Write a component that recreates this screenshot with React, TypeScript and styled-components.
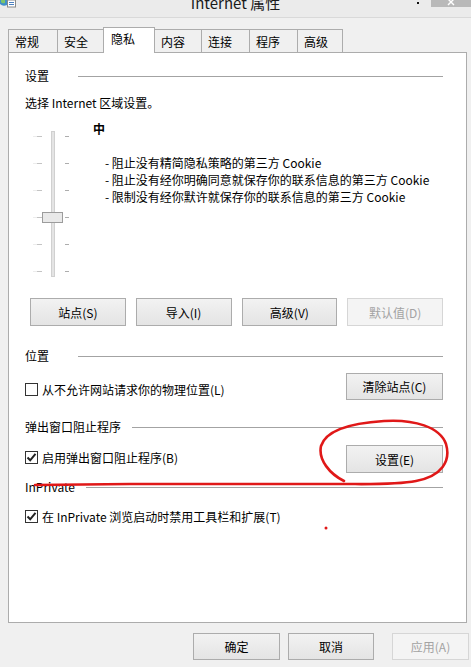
import React from "react";
import styled, { createGlobalStyle } from "styled-components";

const Global = createGlobalStyle`
  html, body { margin: 0; padding: 0; background: #f0f0f0; }
  body {
    font-family: "Noto Sans CJK SC", "Noto Sans", sans-serif;
    font-size: 12px;
    color: #000;
  }
  * { box-sizing: border-box; }
`;

const Window = styled.div`
  position: relative;
  width: 471px;
  height: 667px;
  overflow: hidden;
  background: #f0f0f0;
  display: flex;
  flex-direction: column;
`;

const TitleBar = styled.div`
  height: 18px;
  border-bottom: 1px solid #d9d9d9;
  background: #ebebeb;
  display: grid;
  grid-template-columns: 1fr auto 1fr;
  overflow: hidden;
`;

const TitleIcon = styled.div`
  display: flex;
  align-items: flex-start;
`;

const TitleText = styled.div`
  font-size: 15px;
  line-height: 15px;
  margin-top: -5px;
  color: #1a1a1a;
  white-space: nowrap;
`;

const TitleControls = styled.div`
  display: flex;
  justify-content: flex-end;
  align-items: flex-start;
`;

const Dot = styled.div`
  width: 2px;
  height: 2px;
  margin-top: 2px;
  margin-right: 12px;
  background: #111;
`;

const CloseBtn = styled.div`
  width: 40px;
  height: 7px;
  background: #b9b9b9;
  display: flex;
  justify-content: center;
`;

const Body = styled.div`
  padding: 9px 0 0 8px;
  display: flex;
  flex-direction: column;
`;

const TabStrip = styled.div`
  display: flex;
  align-items: flex-end;
  height: 25px;
`;

const Tab = styled.div<{ $w: number; $active?: boolean; $first?: boolean }>`
  position: relative;
  z-index: ${(p) => (p.$active ? 2 : 1)};
  width: ${(p) => p.$w}px;
  height: ${(p) => (p.$active ? 26 : 23)}px;
  margin-bottom: ${(p) => (p.$active ? -1 : 0)}px;
  margin-left: ${(p) => (p.$first ? 0 : -1)}px;
  border: 1px solid #acacac;
  border-bottom: none;
  background: ${(p) => (p.$active ? "#ffffff" : "#f0f0f0")};
  padding: ${(p) => (p.$active ? "3px 0 0 7px" : "4px 0 0 6px")};
  line-height: 16px;
  white-space: nowrap;
`;

const Panel = styled.div`
  width: 459px;
  height: 571px;
  border: 1px solid #acacac;
  background: #fff;
  padding: 15px 23px 0 16px;
  display: flex;
  flex-direction: column;
`;

const GroupHeader = styled.div<{ $mt: number }>`
  display: flex;
  align-items: center;
  height: 16px;
  margin-top: ${(p) => p.$mt}px;
`;

const GroupTitle = styled.span`
  min-width: 53px;
  padding-right: 11px;
  line-height: 16px;
  white-space: nowrap;
`;

const GroupLine = styled.div`
  flex: 1;
  height: 1px;
  background: #a3a3a3;
`;

const TextLine = styled.div<{ $mt?: number }>`
  line-height: 16px;
  margin-top: ${(p) => p.$mt ?? 0}px;
  white-space: nowrap;
`;

const PrivacyBlock = styled.div`
  display: flex;
  margin-top: 10px;
  height: 156px;
`;

const SliderBox = styled.div`
  margin: 10px 0 0 8px;
  width: 37px;
  height: 146px;
`;

const LevelInfo = styled.div`
  margin-left: 23px;
  display: flex;
  flex-direction: column;
`;

const LevelName = styled.div`
  font-weight: bold;
  line-height: 16px;
`;

const LevelList = styled.div`
  margin: 17px 0 0 12px;
  display: flex;
  flex-direction: column;
`;

const LevelItem = styled.div`
  line-height: 17px;
  white-space: nowrap;
`;

const ButtonRow = styled.div`
  margin-top: 21px;
  padding-left: 5px;
  display: grid;
  grid-template-columns: repeat(4, 1fr);
  column-gap: 10px;
`;

const Button = styled.div<{ $disabled?: boolean; $w?: number; $h?: number; $ml?: number }>`
  width: ${(p) => (p.$w ? `${p.$w}px` : "auto")};
  height: ${(p) => p.$h ?? 28}px;
  margin-left: ${(p) => p.$ml ?? 0}px;
  border: 1px solid ${(p) => (p.$disabled ? "#d6d6d6" : "#acacac")};
  background: ${(p) =>
    p.$disabled ? "#f4f4f4" : "linear-gradient(#f2f2f2, #e4e4e4)"};
  color: ${(p) => (p.$disabled ? "#a3a3a3" : "#000")};
  display: flex;
  align-items: center;
  justify-content: center;
  white-space: nowrap;
  flex-shrink: 0;
`;

const OptionRow = styled.div<{ $mt: number }>`
  margin-top: ${(p) => p.$mt}px;
  display: flex;
  justify-content: space-between;
  align-items: flex-start;
`;

const CheckItem = styled.div<{ $top?: number }>`
  margin-top: ${(p) => p.$top ?? 0}px;
  display: flex;
  align-items: center;
  height: 16px;
  white-space: nowrap;
`;

const Box = styled.div`
  width: 13px;
  height: 13px;
  border: 1px solid #333;
  background: #fff;
  margin-right: 4px;
  display: flex;
  align-items: center;
  justify-content: center;
`;

const Footer = styled.div`
  display: flex;
  margin-top: 10px;
  padding-left: 185px;
`;

const Overlay = styled.svg`
  position: absolute;
  left: 0;
  top: 0;
  pointer-events: none;
`;

const Check = ({ checked }: { checked?: boolean }) => (
  <Box>
    {checked && (
      <svg width="11" height="11" viewBox="0 0 11 11">
        <path d="M1.5 5.5 L4.2 8.3 L9.5 1.8" fill="none" stroke="#222" strokeWidth="2" />
      </svg>
    )}
  </Box>
);

const Slider = () => {
  const ticks = [5, 32, 59, 86, 113, 140];
  return (
    <SliderBox>
      <svg width="37" height="146" viewBox="0 0 37 146">
        {ticks.map((y) => (
          <g key={y}>
            <line x1="0" y1={y + 0.5} x2="4" y2={y + 0.5} stroke="#ececec" />
            <line x1="4" y1={y + 0.5} x2="9" y2={y + 0.5} stroke="#c4c4c4" />
            <line x1="32" y1={y + 0.5} x2="36" y2={y + 0.5} stroke="#adadad" />
          </g>
        ))}
        <rect x="18.5" y="0.5" width="3" height="145" fill="#e4e4e4" stroke="#d0d0d0" />
        <rect x="9.5" y="81.5" width="20" height="10" fill="#e9e9e9" stroke="#9c9c9c" />
      </svg>
    </SliderBox>
  );
};

const tabs = [
  { label: "常规", w: 50 },
  { label: "安全", w: 47 },
  { label: "隐私", w: 52, active: true },
  { label: "内容", w: 48 },
  { label: "连接", w: 49 },
  { label: "程序", w: 49 },
  { label: "高级", w: 46 },
];

export default function App() {
  return (
    <>
      <Global />
      <Window>
        <TitleBar>
          <TitleIcon>
            <svg width="16" height="8" viewBox="0 0 16 8">
              <path d="M0 0 H7 V5 Q3 7 0 4 Z" fill="#3f8fc9" />
              <path d="M1 0 H5 V3 Q2 4 1 2 Z" fill="#7cc46a" />
              <rect x="7.5" y="0" width="8" height="7" fill="#fff" stroke="#8a8a8a" />
              <line x1="9" y1="2.5" x2="14" y2="2.5" stroke="#4a7fbf" />
              <line x1="9" y1="4.5" x2="14" y2="4.5" stroke="#4a7fbf" />
            </svg>
          </TitleIcon>
          <TitleText>Internet 属性</TitleText>
          <TitleControls>
            <Dot />
            <CloseBtn>
              <svg width="14" height="7" viewBox="0 0 14 7">
                <path d="M2 -3 L10 5 M12 -3 L4 5" stroke="#fff" strokeWidth="1.4" />
              </svg>
            </CloseBtn>
          </TitleControls>
        </TitleBar>
        <Body>
          <TabStrip>
            {tabs.map((t, i) => (
              <Tab key={t.label} $w={t.w} $active={t.active} $first={i === 0}>
                {t.label}
              </Tab>
            ))}
          </TabStrip>
          <Panel>
            <GroupHeader $mt={0}>
              <GroupTitle>设置</GroupTitle>
              <GroupLine />
            </GroupHeader>
            <TextLine $mt={11}>选择 Internet 区域设置。</TextLine>
            <PrivacyBlock>
              <Slider />
              <LevelInfo>
                <LevelName>中</LevelName>
                <LevelList>
                  <LevelItem>- 阻止没有精简隐私策略的第三方 Cookie</LevelItem>
                  <LevelItem>- 阻止没有经你明确同意就保存你的联系信息的第三方 Cookie</LevelItem>
                  <LevelItem>- 限制没有经你默许就保存你的联系信息的第三方 Cookie</LevelItem>
                </LevelList>
              </LevelInfo>
            </PrivacyBlock>
            <ButtonRow>
              <Button>站点(S)</Button>
              <Button>导入(I)</Button>
              <Button>高级(V)</Button>
              <Button $disabled>默认值(D)</Button>
            </ButtonRow>

            <GroupHeader $mt={22}>
              <GroupTitle>位置</GroupTitle>
              <GroupLine />
            </GroupHeader>
            <OptionRow $mt={9}>
              <CheckItem $top={8}>
                <Check />
                从不允许网站请求你的物理位置(L)
              </CheckItem>
              <Button $w={97} $h={27}>清除站点(C)</Button>
            </OptionRow>

            <GroupHeader $mt={19}>
              <GroupTitle>弹出窗口阻止程序</GroupTitle>
              <GroupLine />
            </GroupHeader>
            <OptionRow $mt={10}>
              <CheckItem $top={4}>
                <Check checked />
                启用弹出窗口阻止程序(B)
              </CheckItem>
              <Button $w={97} $h={28}>设置(E)</Button>
            </OptionRow>

            <GroupHeader $mt={6}>
              <GroupTitle>InPrivate</GroupTitle>
              <GroupLine />
            </GroupHeader>
            <OptionRow $mt={13}>
              <CheckItem>
                <Check checked />
                在 InPrivate 浏览启动时禁用工具栏和扩展(T)
              </CheckItem>
            </OptionRow>
          </Panel>
          <Footer>
            <Button $w={87} $h={27}>确定</Button>
            <Button $w={86} $h={27} $ml={8}>取消</Button>
            <Button $w={77} $h={27} $ml={18} $disabled>应用(A)</Button>
          </Footer>
        </Body>
        <Overlay width="471" height="667" viewBox="0 0 471 667">
          <path
            d="M344 481 C330 474 318 460 321 446 C326 430 352 423 384 421 C414 419 440 427 446 444 C451 461 442 476 416 481 C396 485 370 484 340 484 L130 484 L35 485"
            fill="none"
            stroke="#e01818"
            strokeWidth="2.6"
            strokeLinecap="round"
            strokeLinejoin="round"
          />
          <circle cx="326" cy="528" r="1.5" fill="#e01818" />
        </Overlay>
      </Window>
    </>
  );
}
